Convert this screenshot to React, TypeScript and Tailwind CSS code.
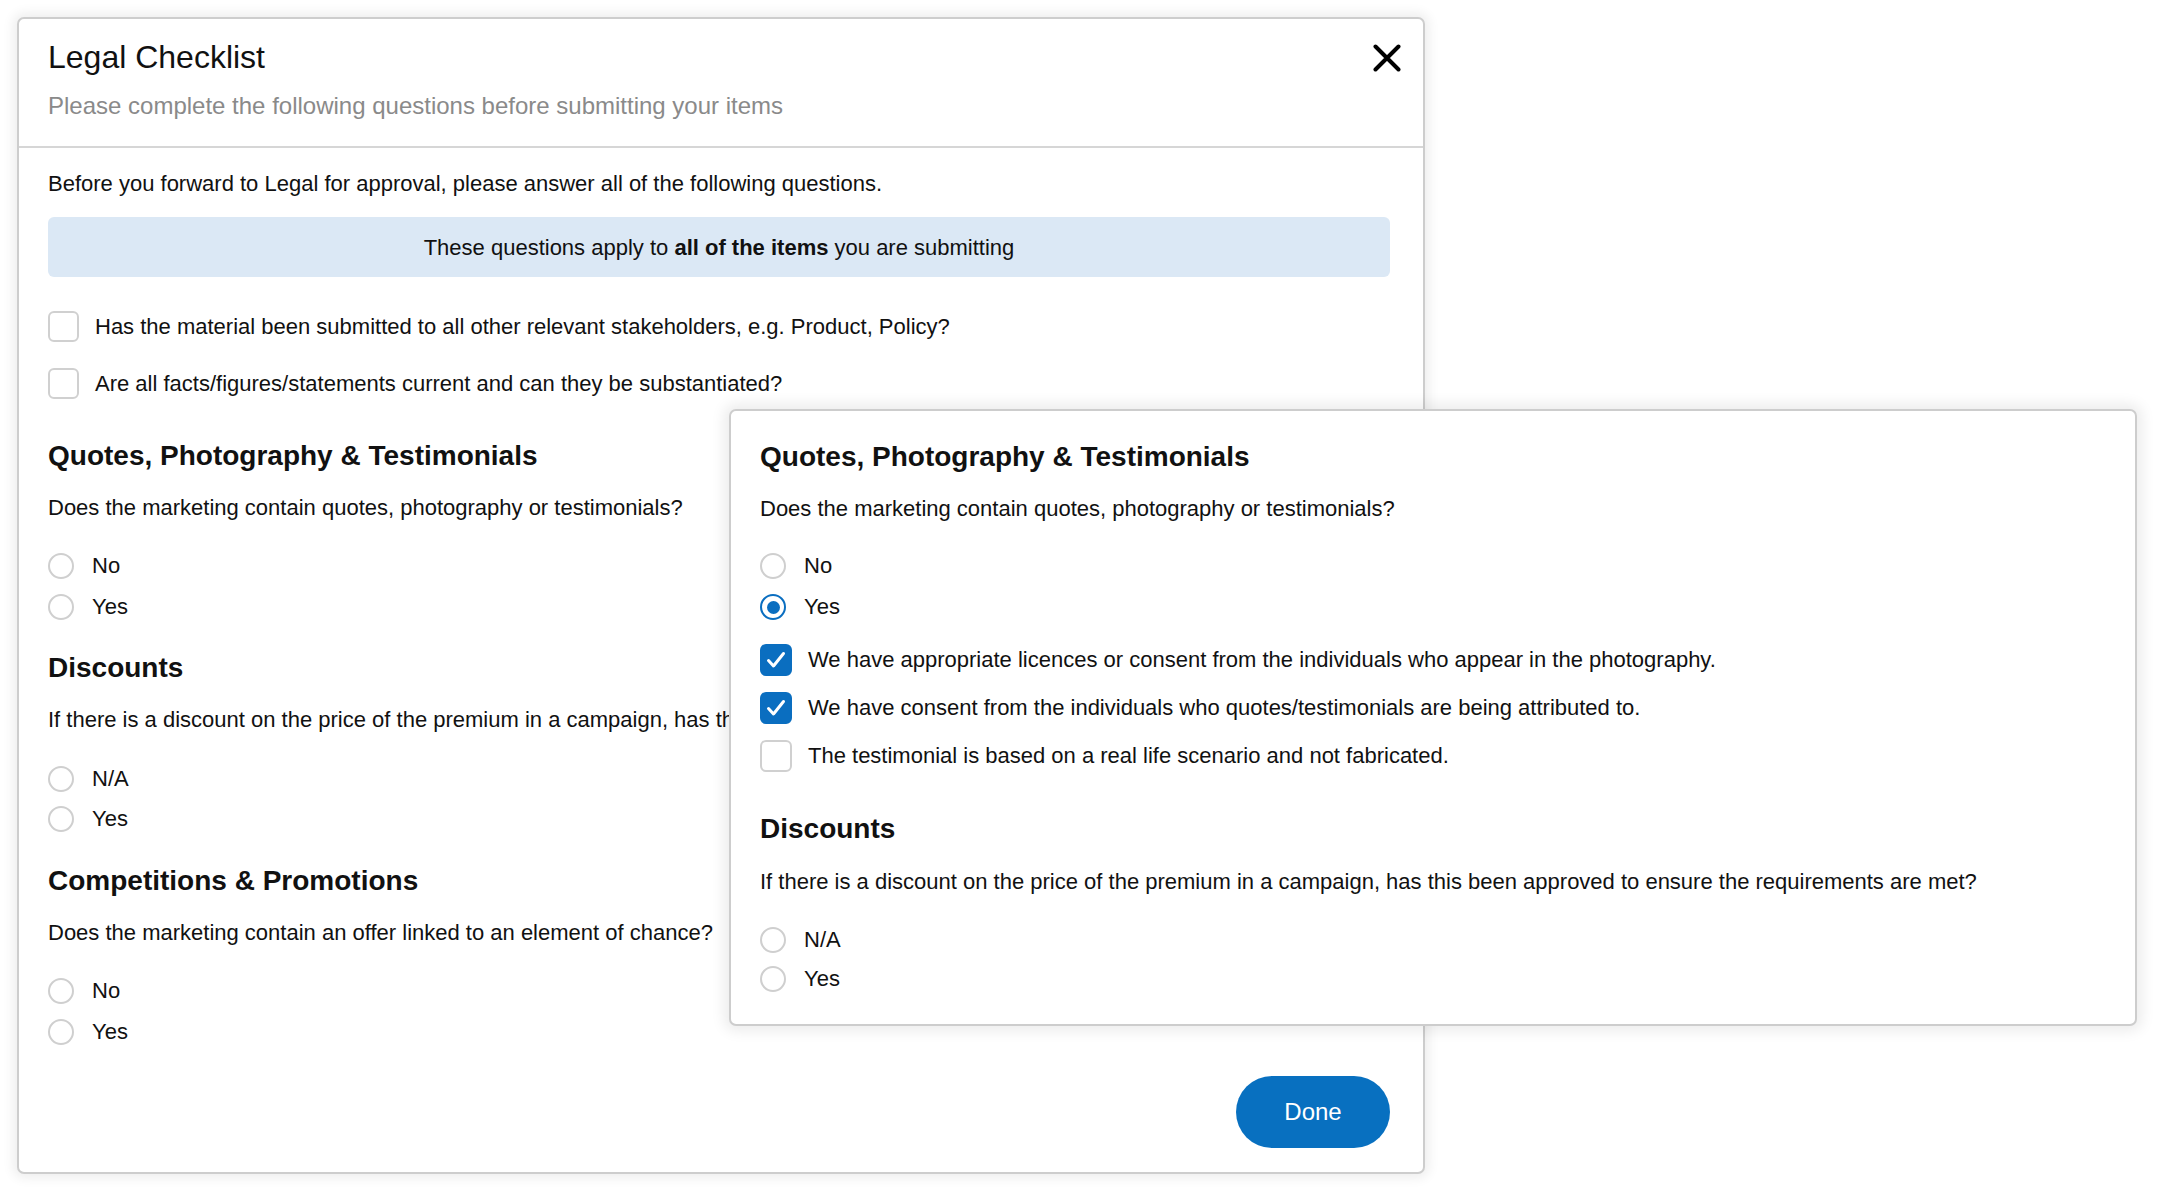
import React from "react";

const font = { fontFamily: '"Liberation Sans", Arial, sans-serif' };

function Radio({ label, checked = false }: { label: string; checked?: boolean }) {
  return (
    <div className="flex h-[30px] items-center">
      <div
        className={
          checked
            ? "flex h-[26px] w-[26px] items-center justify-center rounded-full border-[2.5px] border-[#0a6ec0]"
            : "h-[26px] w-[26px] rounded-full border-2 border-[#cfcfcf]"
        }
      >
        {checked && <div className="h-[13px] w-[13px] rounded-full bg-[#0a6ec0]" />}
      </div>
      <span className="ml-[18px] text-[22px] leading-[30px] text-[#111]">{label}</span>
    </div>
  );
}

function Check({ label, checked = false, size = 31 }: { label: string; checked?: boolean; size?: number }) {
  return (
    <div className="flex items-center">
      {checked ? (
        <div className="flex h-[32px] w-[32px] items-center justify-center rounded-[6px] bg-[#0a6ec0]">
          <svg width="22" height="22" viewBox="0 0 22 22" fill="none">
            <path d="M3.5 11.5 L8.5 17 L18.5 4.5" stroke="white" strokeWidth="3" strokeLinecap="round" strokeLinejoin="round" />
          </svg>
        </div>
      ) : (
        <div
          className={
            size === 32
              ? "h-[32px] w-[32px] rounded-[6px] border-2 border-[#d0d0d0]"
              : "h-[31px] w-[31px] rounded-[6px] border-2 border-[#d0d0d0]"
          }
        />
      )}
      <span className="ml-[16px] text-[22px] leading-[30px] text-[#111]">{label}</span>
    </div>
  );
}

function Heading({ children }: { children: React.ReactNode }) {
  return <h2 className="h-[34px] text-[28px] font-bold leading-[34px] text-[#111]">{children}</h2>;
}

function Question({ children, mt = 20 }: { children: React.ReactNode; mt?: number }) {
  return (
    <p
      className={
        (mt === 21 ? "mt-[21px]" : "mt-[20px]") +
        " h-[30px] whitespace-nowrap text-[22px] leading-[30px] text-[#111]"
      }
    >
      {children}
    </p>
  );
}

export default function App() {
  return (
    <div className="relative h-[1200px] w-[2162px] overflow-hidden bg-white" style={font}>
      {/* Main dialog */}
      <div className="absolute left-[17px] top-[17px] flex h-[1157px] w-[1408px] flex-col overflow-hidden rounded-[7px] border-2 border-[#cdcdcd] bg-white shadow-[0_0_12px_4px_rgba(0,0,0,0.07)]">
        {/* Header */}
        <div className="relative border-b-2 border-[#d6d6d6] px-[29px] pt-[19px] pb-[24px]">
          <div className="h-[38px] text-[32px] leading-[38px] text-[#111]">Legal Checklist</div>
          <div className="mt-[14px] h-[32px] text-[24px] leading-[32px] text-[#8a8a8a]">
            Please complete the following questions before submitting your items
          </div>
          <button className="absolute right-[21px] top-[24px] flex h-[30px] w-[30px] items-center justify-center">
            <svg width="28" height="28" viewBox="0 0 28 28" fill="none">
              <path d="M2.5 2.5 L25.5 25.5 M25.5 2.5 L2.5 25.5" stroke="#000" strokeWidth="4" strokeLinecap="round" />
            </svg>
          </button>
        </div>

        {/* Body */}
        <div className="flex flex-1 flex-col pl-[29px] pr-[33px] pt-[21px]">
          <p className="h-[30px] text-[22px] leading-[30px] text-[#111]">
            Before you forward to Legal for approval, please answer all of the following questions.
          </p>
          <div className="mt-[18px] flex h-[60px] items-center justify-center rounded-[6px] bg-[#dbe8f5] text-[22px] text-[#111]">
            <span>
              These questions apply to <b>all of the items</b> you are submitting
            </span>
          </div>
          <div className="mt-[34px] flex flex-col gap-[26px]">
            <Check label="Has the material been submitted to all other relevant stakeholders, e.g. Product, Policy?" />
            <Check label="Are all facts/figures/statements current and can they be substantiated?" />
          </div>

          <div className="mt-[40px]">
            <Heading>Quotes, Photography &amp; Testimonials</Heading>
            <Question>Does the marketing contain quotes, photography or testimonials?</Question>
            <div className="mt-[28px] flex flex-col gap-[11px]">
              <Radio label="No" />
              <Radio label="Yes" />
            </div>
          </div>

          <div className="mt-[29px]">
            <Heading>Discounts</Heading>
            <Question>
              If there is a discount on the price of the premium in a campaign, has this been approved to ensure the
              requirements are met?
            </Question>
            <div className="mt-[29px] flex flex-col gap-[10px]">
              <Radio label="N/A" />
              <Radio label="Yes" />
            </div>
          </div>

          <div className="mt-[30px]">
            <Heading>Competitions &amp; Promotions</Heading>
            <Question>Does the marketing contain an offer linked to an element of chance?</Question>
            <div className="mt-[28px] flex flex-col gap-[11px]">
              <Radio label="No" />
              <Radio label="Yes" />
            </div>
          </div>

          <div className="mt-[29px] flex justify-end">
            <button className="h-[72px] w-[154px] rounded-full bg-[#0870c0] text-[24px] text-white">Done</button>
          </div>
        </div>
      </div>

      {/* Overlay panel */}
      <div className="absolute left-[729px] top-[409px] h-[617px] w-[1408px] rounded-[7px] border-2 border-[#cdcdcd] bg-white pl-[29px] pt-[29px] shadow-[0_0_14px_5px_rgba(0,0,0,0.08)]">
        <Heading>Quotes, Photography &amp; Testimonials</Heading>
        <Question>Does the marketing contain quotes, photography or testimonials?</Question>
        <div className="mt-[27px] flex flex-col gap-[11px]">
          <Radio label="No" />
          <Radio label="Yes" checked />
        </div>
        <div className="mt-[22px] flex flex-col gap-[16px]">
          <Check label="We have appropriate licences or consent from the individuals who appear in the photography." checked />
          <Check label="We have consent from the individuals who quotes/testimonials are being attributed to." checked />
          <Check label="The testimonial is based on a real life scenario and not fabricated." size={32} />
        </div>
        <div className="mt-[40px]">
          <Heading>Discounts</Heading>
          <Question mt={21}>
            If there is a discount on the price of the premium in a campaign, has this been approved to ensure the
            requirements are met?
          </Question>
          <div className="mt-[28px] flex flex-col gap-[9px]">
            <Radio label="N/A" />
            <Radio label="Yes" />
          </div>
        </div>
      </div>
    </div>
  );
}
